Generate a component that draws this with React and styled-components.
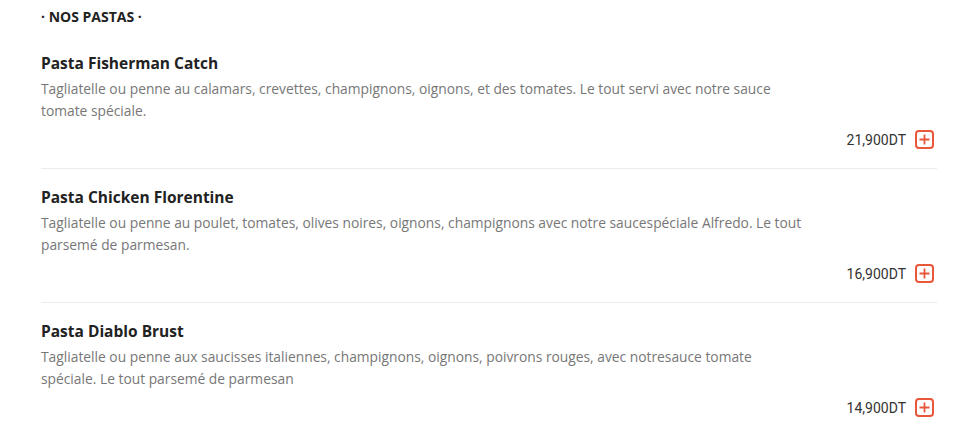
import React from "react";
import styled, { createGlobalStyle } from "styled-components";

const Global = createGlobalStyle`
  html, body { margin: 0; padding: 0; background: #fff; }
  body { font-family: "Open Sans", sans-serif; }
`;

const Page = styled.div`
  width: 955px;
  padding: 8px 18px 0 41px;
  box-sizing: border-box;
`;

const Section = styled.section`
  width: 896px;
`;

const Heading = styled.h3`
  margin: 0 0 9px;
  font-family: "Open Sans", sans-serif;
  font-weight: 700;
  font-size: 14px;
  line-height: 18px;
  color: #222;
`;

const Item = styled.article`
  display: flex;
  flex-direction: column;
  padding: 18px 0 19px;
  border-bottom: ${(p) => (p.$last ? "none" : "1px solid #ebebeb")};
`;

const Title = styled.h4`
  margin: 0 0 5px;
  font-family: "Open Sans", sans-serif;
  font-weight: 700;
  font-size: 15.5px;
  line-height: 20px;
  color: #222;
`;

const Desc = styled.p`
  margin: 0;
  width: 765px;
  font-family: "Open Sans", sans-serif;
  font-size: 13.8px;
  line-height: 22px;
  color: #777;
`;

const PriceRow = styled.div`
  display: flex;
  justify-content: flex-end;
  align-items: center;
  gap: 9px;
  margin-top: 8px;
  padding-right: 3px;
`;

const Price = styled.span`
  font-family: "Roboto", sans-serif;
  font-size: 14px;
  color: #333;
`;

const AddButton = styled.button`
  width: 19px;
  height: 19px;
  padding: 0;
  border: none;
  background: none;
  display: flex;
  cursor: pointer;
`;

const PlusIcon = () => (
  <svg width="19" height="19" viewBox="0 0 19 19" fill="none">
    <rect x="1" y="1" width="17" height="17" rx="3" stroke="#e9573b" strokeWidth="2" />
    <path d="M9.5 4.5v10M4.5 9.5h10" stroke="#e9573b" strokeWidth="1.8" />
  </svg>
);

const items = [
  {
    title: "Pasta Fisherman Catch",
    desc: "Tagliatelle ou penne au calamars, crevettes, champignons, oignons, et des tomates. Le tout servi avec notre sauce tomate spéciale.",
    price: "21,900DT",
  },
  {
    title: "Pasta Chicken Florentine",
    desc: "Tagliatelle ou penne au poulet, tomates, olives noires, oignons, champignons avec notre saucespéciale Alfredo. Le tout parsemé de parmesan.",
    price: "16,900DT",
  },
  {
    title: "Pasta Diablo Brust",
    desc: "Tagliatelle ou penne aux saucisses italiennes, champignons, oignons, poivrons rouges, avec notresauce tomate spéciale. Le tout parsemé de parmesan",
    price: "14,900DT",
  },
];

export default function App() {
  return (
    <>
      <Global />
      <Page>
        <Section>
          <Heading>· NOS PASTAS ·</Heading>
          {items.map((it, i) => (
            <Item key={it.title} $last={i === items.length - 1}>
              <Title>{it.title}</Title>
              <Desc>{it.desc}</Desc>
              <PriceRow>
                <Price>{it.price}</Price>
                <AddButton aria-label="Ajouter">
                  <PlusIcon />
                </AddButton>
              </PriceRow>
            </Item>
          ))}
        </Section>
      </Page>
    </>
  );
}
